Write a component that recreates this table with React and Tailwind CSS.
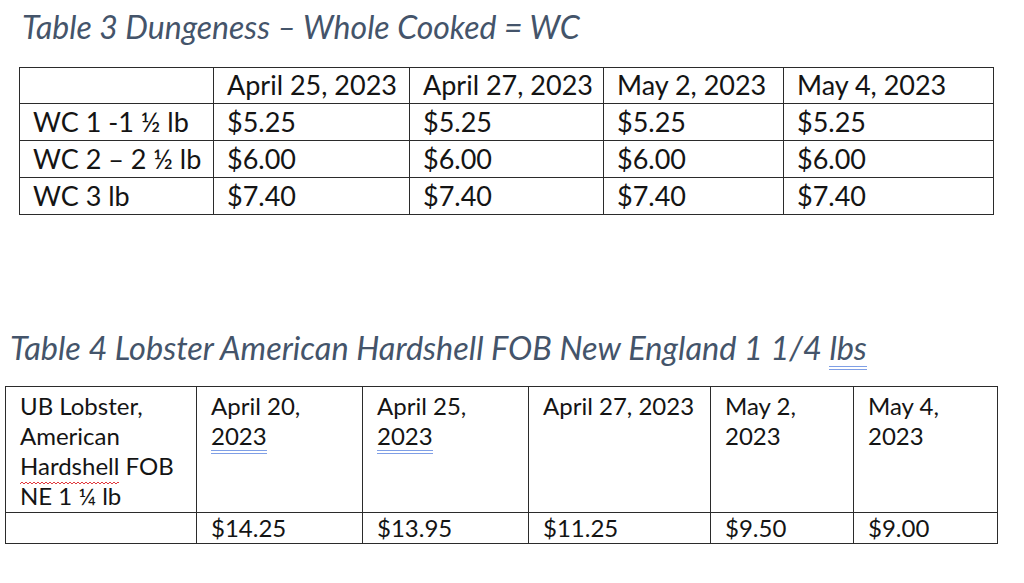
const dungeness = {
  dates: ['April 25, 2023', 'April 27, 2023', 'May 2, 2023', 'May 4, 2023'],
  rows: [
    ['WC 1 -1 ½ lb', '$5.25', '$5.25', '$5.25', '$5.25'],
    ['WC 2 – 2 ½ lb', '$6.00', '$6.00', '$6.00', '$6.00'],
    ['WC 3 lb', '$7.40', '$7.40', '$7.40', '$7.40'],
  ],
};

const lobsterPrices = ['$14.25', '$13.95', '$11.25', '$9.50', '$9.00'];

const font = { fontFamily: 'Lato, "Open Sans", sans-serif' };

// Word-style blue double underline for grammar marks
const Grammar = ({ children }) => (
  <span className="relative inline-block">
    {children}
    <span className="absolute left-0 right-0 bottom-[-3px] h-[4px] border-y-[1.5px] border-[#7f9fe6]" />
  </span>
);

// red squiggly spelling mark
const Spelling = ({ children }) => (
  <span className="relative inline-block">
    {children}
    <svg className="absolute left-0 bottom-[-4px]" width="100%" height="4" preserveAspectRatio="none">
      <defs>
        <pattern id="wavy" width="4" height="4" patternUnits="userSpaceOnUse">
          <path d="M0 3 L2 1 L4 3" fill="none" stroke="#e0393e" strokeWidth="1" />
        </pattern>
      </defs>
      <rect width="100%" height="4" fill="url(#wavy)" />
    </svg>
  </span>
);

const cell1 = 'border border-[#2b2b2b] pl-[13px] text-[27px] leading-none align-bottom pb-[5px]';
const cell2 = 'border border-[#2b2b2b] pl-[14px] pr-2 text-[24px] leading-[30px] align-top';

export default function App() {
  return (
    <div className="w-[1024px] h-[583px] bg-white text-[#141414] overflow-hidden" style={font}>
      <h2 className="pl-[22px] pt-[9px] text-[32px] leading-[36px] italic text-[#44546a]">
        Table 3 Dungeness – Whole Cooked = WC
      </h2>

      <table className="ml-[19px] mt-[22px] border-collapse table-fixed w-[974px]">
        <colgroup>
          <col className="w-[194px]" />
          <col className="w-[196px]" />
          <col className="w-[194px]" />
          <col className="w-[180px]" />
          <col className="w-[210px]" />
        </colgroup>
        <tbody>
          <tr className="h-[36px]">
            <td className={cell1}></td>
            {dungeness.dates.map((d) => (
              <td key={d} className={cell1}>{d}</td>
            ))}
          </tr>
          {dungeness.rows.map((row) => (
            <tr key={row[0]} className="h-[37px]">
              {row.map((v, i) => (
                <td key={i} className={cell1}>{v}</td>
              ))}
            </tr>
          ))}
        </tbody>
      </table>

      <h2 className="pl-[10px] mt-[114px] text-[32.5px] leading-[38px] italic text-[#44546a]">
        Table 4 Lobster American Hardshell FOB New England 1 1/4 <Grammar>lbs</Grammar>
      </h2>

      <table className="ml-[5px] mt-[19px] border-collapse table-fixed w-[992px]">
        <colgroup>
          <col className="w-[191px]" />
          <col className="w-[166px]" />
          <col className="w-[166px]" />
          <col className="w-[182px]" />
          <col className="w-[143px]" />
          <col className="w-[144px]" />
        </colgroup>
        <tbody>
          <tr className="h-[126px]">
            <td className={`${cell2} pt-[4px]`}>
              UB Lobster,<br />American<br /><Spelling>Hardshell</Spelling> FOB<br />NE 1 ¼ lb
            </td>
            <td className={`${cell2} pt-[4px]`}>April 20,<br /><Grammar>2023</Grammar></td>
            <td className={`${cell2} pt-[4px]`}>April 25,<br /><Grammar>2023</Grammar></td>
            <td className={`${cell2} pt-[4px]`}>April 27, 2023</td>
            <td className={`${cell2} pt-[4px]`}>May 2,<br />2023</td>
            <td className={`${cell2} pt-[4px]`}>May 4,<br />2023</td>
          </tr>
          <tr className="h-[31px]">
            <td className={cell2}></td>
            {lobsterPrices.map((p) => (
              <td key={p} className={`${cell2} align-bottom`}>{p}</td>
            ))}
          </tr>
        </tbody>
      </table>
    </div>
  );
}
